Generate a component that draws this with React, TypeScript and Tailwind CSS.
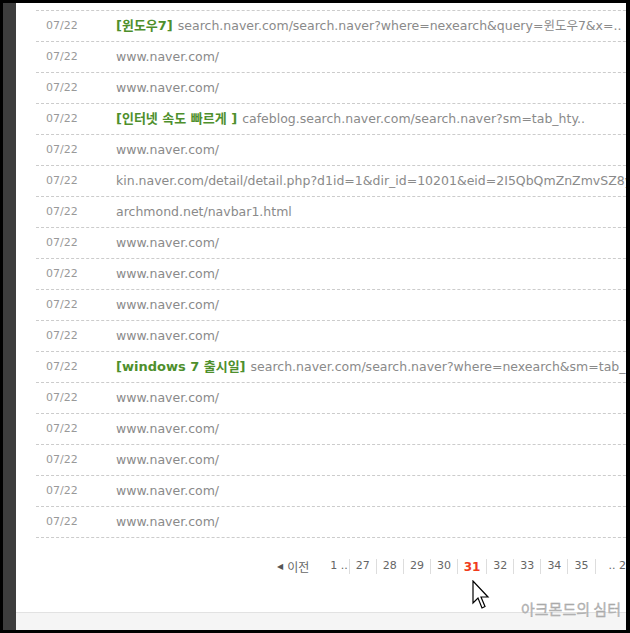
import React from "react";

type Row = { title?: string; url: string };

const rows: Row[] = [
  { title: "[윈도우7]", url: "search.naver.com/search.naver?where=nexearch&query=윈도우7&x=.." },
  { url: "www.naver.com/" },
  { url: "www.naver.com/" },
  { title: "[인터넷 속도 빠르게 ]", url: "cafeblog.search.naver.com/search.naver?sm=tab_hty.." },
  { url: "www.naver.com/" },
  { url: "kin.naver.com/detail/detail.php?d1id=1&dir_id=10201&eid=2I5QbQmZnZmvSZ8y" },
  { url: "archmond.net/navbar1.html" },
  { url: "www.naver.com/" },
  { url: "www.naver.com/" },
  { url: "www.naver.com/" },
  { url: "www.naver.com/" },
  { title: "[windows 7 출시일]", url: "search.naver.com/search.naver?where=nexearch&sm=tab_" },
  { url: "www.naver.com/" },
  { url: "www.naver.com/" },
  { url: "www.naver.com/" },
  { url: "www.naver.com/" },
  { url: "www.naver.com/" },
];

const pages = ["27", "28", "29", "30", "31", "32", "33", "34", "35"];

const font = { fontFamily: '"DejaVu Sans", Verdana, "Noto Sans CJK KR", sans-serif' };

export default function App() {
  return (
    <div className="w-[630px] h-[633px] bg-black pt-[3px] pb-[3px] pr-[4px] pl-[3px] flex relative overflow-hidden" style={font}>
      <div className="w-[13px] bg-[#3d3d3d] shrink-0" />
      <div className="flex-1 bg-white flex flex-col overflow-hidden">
        <div className="flex-1 overflow-hidden">
          <div className="ml-[20px] mt-[7px] border-t border-dashed border-[#cccccc] w-[620px]">
            {rows.map((r, i) => (
              <div
                key={i}
                className="h-[31px] border-b border-dashed border-[#cccccc] flex items-center whitespace-nowrap overflow-hidden"
              >
                <span className="w-[80px] pl-[10px] shrink-0 text-[11px] text-[#999999]">07/22</span>
                {r.title && (
                  <span
                    className="text-[13px] font-bold text-[#4e8f2c] mr-[5px]"
                    style={{ fontFamily: '"DejaVu Sans", "Noto Sans CJK KR", sans-serif' }}
                  >
                    {r.title}
                  </span>
                )}
                <span className="text-[12.5px] text-[#8a8a8a]">{r.url}</span>
              </div>
            ))}
          </div>
          <div className="flex items-center h-[19px] mt-[19px] pl-[261px] whitespace-nowrap text-[11px] text-[#666666]">
            <span className="flex items-center">
              <span className="text-[8px] mr-[4px] text-[#555]">◀</span>
              <span className="text-[12px]" style={{ fontFamily: '"Noto Sans CJK KR", sans-serif' }}>이전</span>
            </span>
            <span className="ml-[21px] w-[19px]">1 ..</span>
            <span className="w-px h-[15px] bg-[#dddddd]" />
            {pages.map((p) => (
              <React.Fragment key={p}>
                {p === "31" ? (
                  <span className="w-[29px] text-center font-bold text-[12px] text-[#f03b1c]">{p}</span>
                ) : (
                  <span className="w-[27px] text-center">{p}</span>
                )}
                <span className="w-px h-[15px] bg-[#dddddd]" />
              </React.Fragment>
            ))}
            <span className="ml-[13px]">.. 2</span>
          </div>
        </div>
        <div className="h-[18px] bg-[#f5f5f5] border-t border-[#e2e2e2] shrink-0" />
      </div>
      <div
        className="absolute left-[521px] top-[598px] text-[15px] text-[#b8b8b8] whitespace-nowrap"
        style={{ fontFamily: '"Noto Sans CJK KR", sans-serif', WebkitTextStroke: "0.3px #a0a0a0" }}
      >
        아크몬드의 심터
      </div>
      <svg className="absolute left-[472px] top-[580px]" width="20" height="30" viewBox="0 0 20 30">
        <path
          d="M1 1 L1 23 L6 18 L10 28 L13 26.5 L9 17 L16 17 Z"
          fill="#ffffff"
          stroke="#000000"
          strokeWidth="1.2"
          strokeLinejoin="miter"
        />
      </svg>
    </div>
  );
}
